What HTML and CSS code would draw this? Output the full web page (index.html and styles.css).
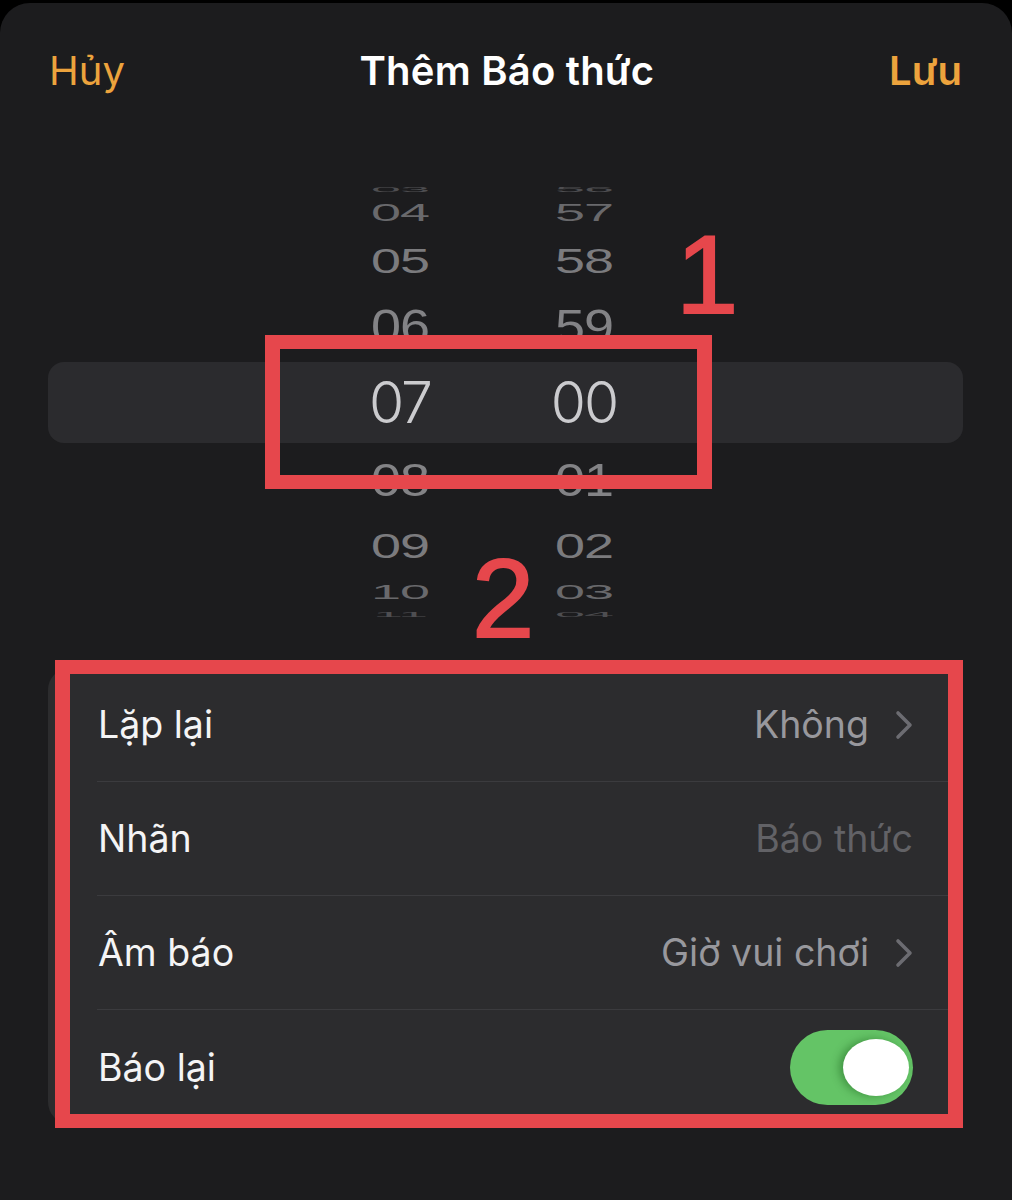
FILE: index.html
```html
<!DOCTYPE html>
<html lang="vi">
<head>
<meta charset="utf-8">
<title>Thêm Báo thức</title>
<link rel="stylesheet" href="styles.css">
</head>
<body>
<div class="screen">
  <div class="sheet">
    <header class="nav">
      <span class="nav-btn">Hủy</span>
      <span class="nav-title">Thêm Báo thức</span>
      <span class="nav-btn strong">Lưu</span>
    </header>

    <section class="picker">
      <div class="band"></div>
      <div class="wheels">
        <div class="wheel">
          <div class="item s1">03</div>
          <div class="item s2">04</div>
          <div class="item s3">05</div>
          <div class="item s4">06</div>
          <div class="item sel">07</div>
          <div class="item s5">08</div>
          <div class="item s6">09</div>
          <div class="item s7">10</div>
          <div class="item s8">11</div>
        </div>
        <div class="wheel">
          <div class="item s1">56</div>
          <div class="item s2">57</div>
          <div class="item s3">58</div>
          <div class="item s4">59</div>
          <div class="item sel">00</div>
          <div class="item s5">01</div>
          <div class="item s6">02</div>
          <div class="item s7">03</div>
          <div class="item s8">04</div>
        </div>
      </div>
    </section>

    <section class="card">
      <div class="row">
        <div class="row-inner">
          <span class="label">Lặp lại</span>
          <span class="value">Không</span>
          <svg class="chev" width="18" height="30" viewBox="0 0 18 30"><path d="M3 3 L15 15 L3 27" fill="none" stroke="#6c6c71" stroke-width="3.6" stroke-linecap="round" stroke-linejoin="round"/></svg>
        </div>
      </div>
      <div class="row">
        <div class="row-inner">
          <span class="label">Nhãn</span>
          <span class="value placeholder">Báo thức</span>
        </div>
      </div>
      <div class="row">
        <div class="row-inner">
          <span class="label">Âm báo</span>
          <span class="value">Giờ vui chơi</span>
          <svg class="chev" width="18" height="30" viewBox="0 0 18 30"><path d="M3 3 L15 15 L3 27" fill="none" stroke="#6c6c71" stroke-width="3.6" stroke-linecap="round" stroke-linejoin="round"/></svg>
        </div>
      </div>
      <div class="row last">
        <div class="row-inner">
          <span class="label">Báo lại</span>
          <span class="toggle on"><span class="knob"></span></span>
        </div>
      </div>
    </section>
  </div>

  <div class="mark box1"></div>
  <div class="mark box2"></div>
  <div class="mark num num1">1</div>
  <div class="mark num num2">2</div>
</div>
</body>
</html>
```

FILE: styles.css
```css
html, body {
  margin: 0;
  padding: 0;
  background: #000;
}

.screen {
  position: relative;
  width: 1012px;
  height: 1200px;
  padding-top: 3px;
  box-sizing: border-box;
  overflow: hidden;
  font-family: Inter, "Noto Sans", "Liberation Sans", sans-serif;
}

.sheet {
  background: #1c1c1e;
  height: 1197px;
  border-radius: 30px 30px 0 0;
  overflow: hidden;
}

/* Header */
.nav {
  height: 134px;
  display: flex;
  align-items: center;
  justify-content: space-between;
  padding: 0 50px 0 49px;
}

.nav-btn {
  color: #eca33d;
  font-size: 40px;
  font-weight: 400;
}

.nav-btn.strong {
  font-weight: 600;
}

.nav-title {
  color: #ffffff;
  font-size: 40px;
  font-weight: 600;
  letter-spacing: 0.2px;
}

/* Picker */
.picker {
  margin-top: 13px;
  height: 500px;
  display: grid;
  grid-template-columns: 1fr;
  grid-template-rows: 1fr;
}

.band,
.wheels {
  grid-area: 1 / 1;
}

.band {
  align-self: start;
  margin: 212px 49px 0 48px;
  height: 81px;
  border-radius: 16px;
  background: #2b2b2e;
}

.wheels {
  display: flex;
  justify-content: center;
  gap: 64px;
  padding-right: 28px;
}

.wheel {
  width: 120px;
  padding-top: 9px;
  display: flex;
  flex-direction: column;
}

.item {
  height: 60px;
  line-height: 60px;
  text-align: center;
  font-family: "Liberation Sans", Arial, sans-serif;
  font-size: 54px;
  color: #808083;
  letter-spacing: -1px;
  flex: none;
}

.item.sel {
  font-family: Inter, "Noto Sans", sans-serif;
  font-weight: 300;
  font-size: 57px;
  color: #cbcbce;
  letter-spacing: -2px;
}

.s1 { transform: scaleY(0.15); color: #4e4e51; }
.s2 { transform: scaleY(0.46); margin-top: -37px; color: #69696c; }
.s3 { transform: scaleY(0.66); margin-top: -12px; color: #7b7b7e; }
.s4 { transform: scaleY(0.88); margin-top: 6px; color: #838386; }
.sel { margin-top: 17px; }
.s5 { transform: scaleY(0.86); margin-top: 17px; color: #838386; }
.s6 { transform: scaleY(0.64); margin-top: 6px; color: #7b7b7e; }
.s7 { transform: scaleY(0.38); margin-top: -14px; color: #69696c; }
.s8 { transform: scaleY(0.12); margin-top: -37px; color: #4e4e51; }

/* Settings card */
.card {
  margin: 18px 49px 0 48px;
  background: #2c2c2e;
  border-radius: 22px;
  overflow: hidden;
}

.row {
  padding-left: 49px;
}

.row-inner {
  height: 114px;
  display: flex;
  align-items: center;
  padding-right: 50px;
  padding-left: 1px;
  border-bottom: 1.5px solid #3b3b3e;
  box-sizing: border-box;
}

.row.last .row-inner {
  border-bottom: none;
}

.label {
  color: #f4f4f5;
  font-size: 37.5px;
  flex: 1;
}

.value {
  color: #98989d;
  font-size: 37.5px;
}

.value.placeholder {
  color: #626266;
}

.chev {
  margin-left: 26px;
  flex: none;
}

.toggle {
  width: 123px;
  height: 75px;
  border-radius: 38px;
  background: #64c466;
  display: flex;
  align-items: center;
  justify-content: flex-end;
  padding-right: 4px;
  box-sizing: border-box;
}

.knob {
  width: 66px;
  height: 57px;
  border-radius: 50%;
  background: #ffffff;
  box-shadow: -4px 0 8px rgba(0, 60, 0, 0.35);
}

/* Red annotation overlays */
.mark {
  position: absolute;
}

.box1,
.box2 {
  box-sizing: border-box;
  border: 15px solid #e6474c;
  border-top-width: 14px;
  border-bottom-width: 14px;
}

.box1 {
  left: 265px;
  top: 335px;
  width: 447px;
  height: 154px;
}

.box2 {
  left: 55px;
  top: 660px;
  width: 908px;
  height: 468px;
}

.num {
  font-family: "Liberation Sans", Arial, sans-serif;
  color: #e6474c;
  font-size: 112px;
  line-height: 112px;
  -webkit-text-stroke: 2px #e6474c;
}

.num1 {
  left: 676px;
  top: 219px;
}

.num2 {
  left: 472px;
  top: 543px;
}
```
